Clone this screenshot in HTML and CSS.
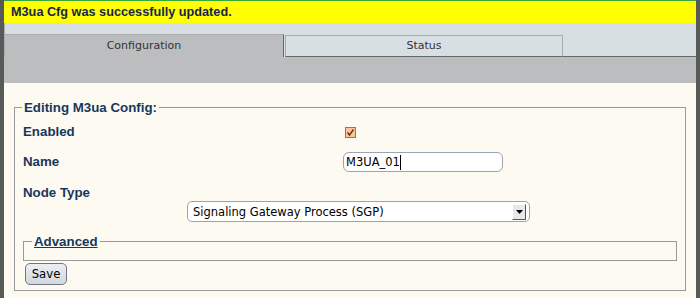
FILE: index.html
```html
<!DOCTYPE html>
<html>
<head>
<meta charset="utf-8">
<link rel="stylesheet" href="styles.css">
</head>
<body>
<div class="frame">
  <div class="notice">M3ua Cfg was successfully updated.</div>
  <div class="tabbar">
    <div class="tab active">Configuration</div>
    <div class="tab">Status</div>
    <div class="tabrest"></div>
  </div>
  <div class="band"></div>
  <div class="content">
    <fieldset class="main">
      <legend>Editing M3ua Config:</legend>
      <div class="row r-enabled">
        <span class="label">Enabled</span>
        <span class="check"><svg width="11" height="11" viewBox="0 0 11 11"><rect x="0.5" y="0.5" width="10" height="10" fill="#f7c89a" stroke="#8a7a6a"/><path d="M2.5 5.5 L4.5 8 L8.5 2.5" fill="none" stroke="#7a2a10" stroke-width="1.4"/></svg></span>
      </div>
      <div class="row r-name">
        <span class="label">Name</span>
        <span class="input">M3UA_01<span class="caret"></span></span>
      </div>
      <div class="row r-type">
        <span class="label">Node Type</span>
      </div>
      <div class="selrow">
        <div class="select"><span class="seltext">Signaling Gateway Process (SGP)</span><span class="arrow"><svg width="7" height="4" viewBox="0 0 7 4"><path d="M0 0 H7 L3.5 4 Z" fill="#000"/></svg></span></div>
      </div>
      <fieldset class="adv">
        <legend><a href="#">Advanced</a></legend>
      </fieldset>
      <button class="save">Save</button>
    </fieldset>
  </div>
</div>
</body>
</html>
```

FILE: styles.css
```css
html, body {
  margin: 0;
  padding: 0;
  background: #565b57;
  font-family: "DejaVu Sans", "Verdana", sans-serif;
}
.frame {
  margin: 0 4px 0 4px;
  height: 298px;
  background: #fdfaf2;
  overflow: hidden;
}
.notice {
  margin-left: -1px;
  height: 22px;
  background: #ffff00;
  border-top: 1px solid #38a838;
  color: #14264e;
  font-family: "Liberation Sans", Arial, sans-serif;
  font-weight: bold;
  font-size: 12.7px;
  line-height: 23px;
  padding-left: 8px;
}
.tabbar {
  display: flex;
  align-items: flex-end;
  height: 34px;
  background: #d8dfe2;
  border-left: 1px solid #a7acae;
}
.tab {
  text-align: center;
  font-size: 11px;
  color: #333;
  box-sizing: border-box;
}
.tab.active {
  width: 279px;
  height: 23px;
  background: #bcbdbe;
  border-top: 1px solid #a9abac;
  border-right: 1px solid #656869;
  line-height: 22px;
}
.tab:not(.active) {
  width: 278px;
  margin-left: 1px;
  border: 1px solid #a9acae;
  border-bottom: 1px solid #656869;
  height: 22px;
  line-height: 20px;
}
.tabrest {
  flex: 1;
  height: 0;
  border-bottom: 1px solid #656869;
}
.band {
  height: 26px;
  background: #bcbdbe;
}
.content {
  padding: 17px 10px 0 10px;
}
fieldset.main {
  margin: 0;
  border: 1px solid #9a9a9a;
  padding: 0 8px 4px 8px;
  height: 191px;
  box-sizing: border-box;
}
fieldset legend {
  font-family: "Liberation Sans", Arial, sans-serif;
  font-weight: bold;
  font-size: 13.3px;
  color: #17375c;
  padding: 0 2px 0 2px;
  margin-left: -1px;
}
.row {
  height: 30px;
  display: flex;
  align-items: center;
}
.r-enabled { margin-top: 1px; }
.label {
  font-family: "Liberation Sans", Arial, sans-serif;
  font-weight: bold;
  font-size: 13.3px;
  color: #17375c;
  width: 322px;
}
.check {
  display: flex;
  margin-top: 2px;
}
.input {
  box-sizing: border-box;
  width: 160px;
  height: 20px;
  margin-top: 2px;
  border: 1px solid #98a3b4;
  border-radius: 6px;
  background: #fff;
  font-size: 11.5px;
  padding-left: 2px;
  color: #000;
  display: flex;
  align-items: center;
  margin-left: -2px;
}
.caret {
  display: inline-block;
  width: 1px;
  height: 15px;
  background: #000;
}
.r-type { padding-top: 1px; }
.selrow {
  display: flex;
  margin-top: -6px;
  padding-left: 164px;
}
.select {
  box-sizing: border-box;
  width: 343px;
  height: 21px;
  border: 1px solid #98a3b4;
  border-radius: 5px;
  background: #fff;
  display: flex;
  align-items: center;
  justify-content: space-between;
  font-size: 11.5px;
  color: #000;
  padding: 0 3px 0 5px;
}
.arrow {
  box-sizing: border-box;
  width: 14px;
  height: 16px;
  background: #e8e8e8;
  border-right: 1px solid #555;
  border-bottom: 1px solid #555;
  border-top: 1px solid #fff;
  border-left: 1px solid #fff;
  display: flex;
  align-items: center;
  justify-content: center;
}
fieldset.adv {
  margin: 12px 0 0 0;
  height: 27px;
  box-sizing: border-box;
  border: 1px solid #9a9a9a;
  padding: 0;
}
fieldset.adv legend {
  margin-left: 8px;
  padding: 0 2px;
}
fieldset.adv a {
  color: #17375c;
  text-decoration: underline;
}
.save {
  margin-top: 2px;
  margin-left: 2px;
  height: 22px;
  width: 42px;
  font-family: "DejaVu Sans", sans-serif;
  font-size: 11.7px;
  color: #000;
  background: linear-gradient(#eceff2, #d3d8de);
  border: 1px solid #6e7680;
  border-radius: 5px;
  padding: 0;
}
```
